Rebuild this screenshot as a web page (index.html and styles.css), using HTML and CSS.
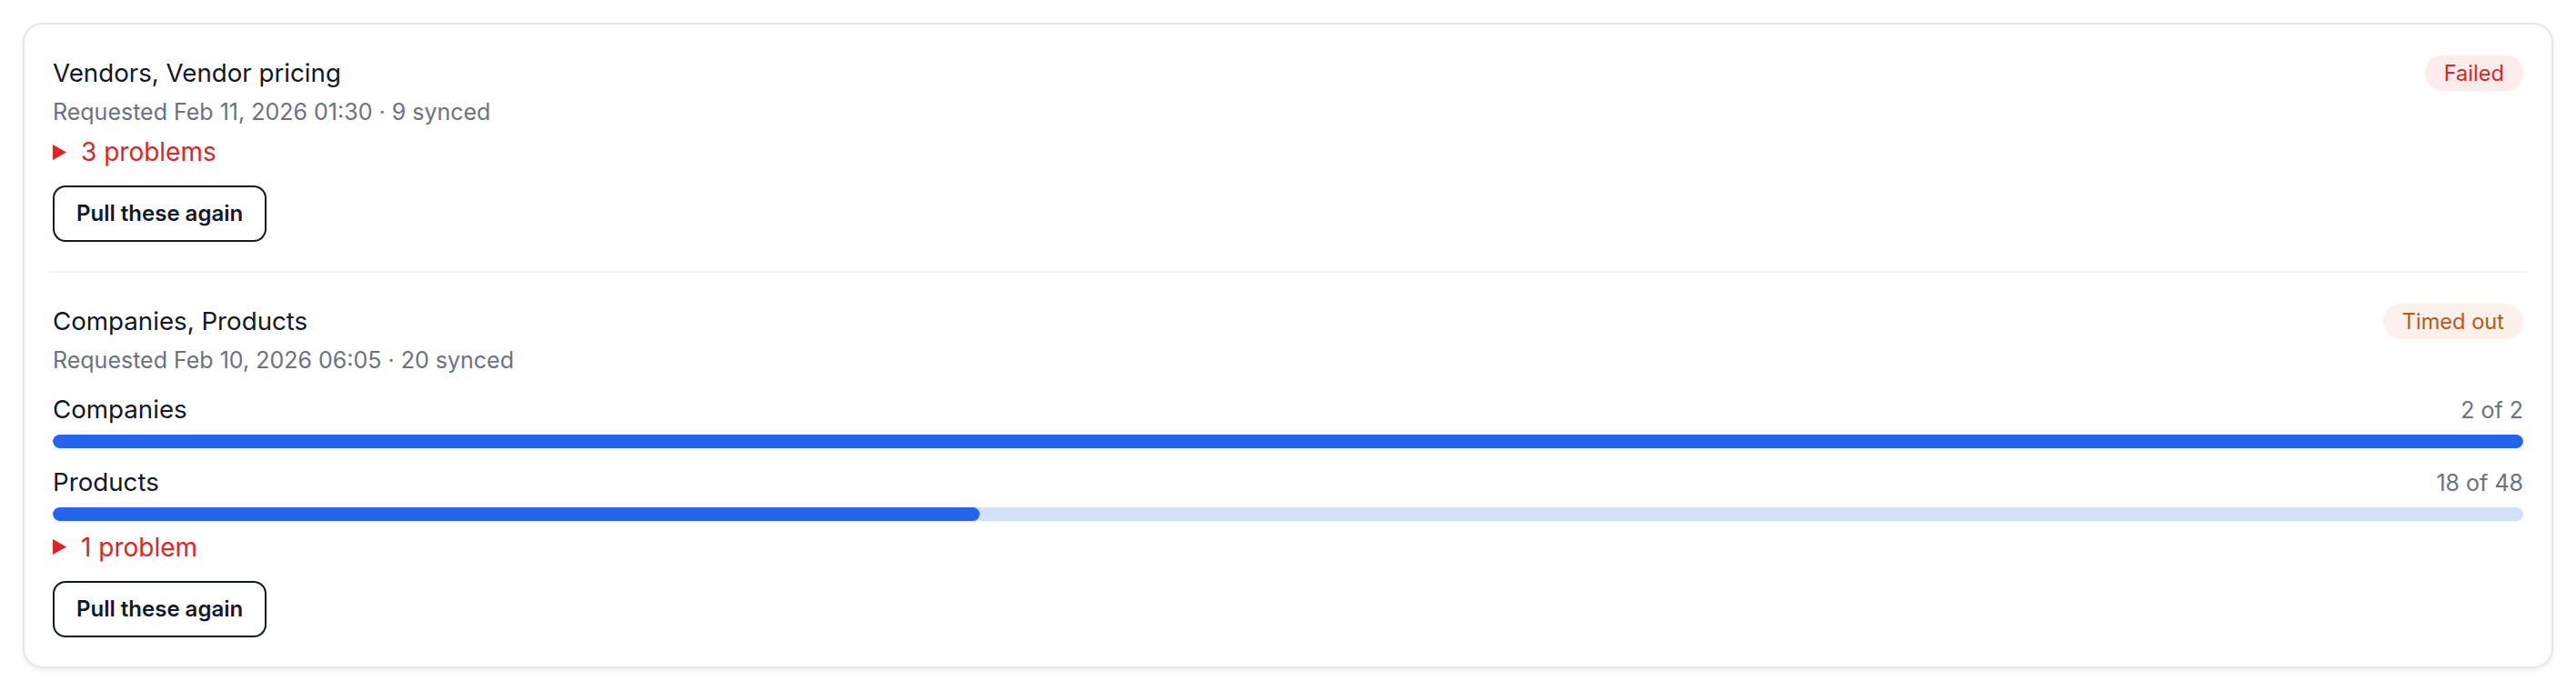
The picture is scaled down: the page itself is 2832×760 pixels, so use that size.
FILE: index.html
```html
<!DOCTYPE html>
<html lang="en">
<head>
<meta charset="utf-8">
<title>Sync requests</title>
<link rel="stylesheet" href="styles.css">
</head>
<body>
<div class="page">
  <section class="card">
    <article class="job">
      <div class="job-head">
        <h2 class="job-title">Vendors, Vendor pricing</h2>
        <span class="badge badge-failed">Failed</span>
      </div>
      <p class="job-meta">Requested Feb 11, 2026 01:30 · 9 synced</p>
      <div class="problems">
        <svg class="caret" width="15" height="17" viewBox="0 0 15 17"><path d="M0 0 L15 8.5 L0 17 Z" fill="#dc2626"/></svg>
        <span>3 problems</span>
      </div>
      <button class="btn" type="button">Pull these again</button>
    </article>
    <article class="job">
      <div class="job-head">
        <h2 class="job-title">Companies, Products</h2>
        <span class="badge badge-timeout">Timed out</span>
      </div>
      <p class="job-meta">Requested Feb 10, 2026 06:05 · 20 synced</p>
      <div class="progress-list">
        <div class="progress">
          <div class="progress-head">
            <span class="progress-name">Companies</span>
            <span class="progress-count">2 of 2</span>
          </div>
          <div class="track"><div class="fill" style="width:100%"></div></div>
        </div>
        <div class="progress">
          <div class="progress-head">
            <span class="progress-name">Products</span>
            <span class="progress-count">18 of 48</span>
          </div>
          <div class="track"><div class="fill" style="width:37.5%"></div></div>
        </div>
      </div>
      <div class="problems problems-after-bars">
        <svg class="caret" width="15" height="17" viewBox="0 0 15 17"><path d="M0 0 L15 8.5 L0 17 Z" fill="#dc2626"/></svg>
        <span>1 problem</span>
      </div>
      <button class="btn" type="button">Pull these again</button>
    </article>
  </section>
</div>
</body>
</html>
```

FILE: styles.css
```css
* { box-sizing: border-box; }

html, body {
  margin: 0;
  padding: 0;
  background: #ffffff;
}

body {
  font-family: Inter, "Noto Sans", "Liberation Sans", sans-serif;
  color: #111827;
}

.page {
  padding: 25px;
}

.card {
  border: 2px solid #e6e7eb;
  border-radius: 22px;
  box-shadow: 0 2px 4px rgba(17, 24, 39, 0.08);
  padding: 0 27px;
  background: #ffffff;
}

.job {
  display: flex;
  flex-direction: column;
  align-items: flex-start;
  padding: 32px 4px 32px;
}

.job + .job {
  border-top: 2px solid #f1f2f4;
}

.job-head {
  align-self: stretch;
  display: flex;
  justify-content: space-between;
  align-items: center;
}

.job-title {
  margin: 0;
  font-size: 27.7px;
  line-height: 42px;
  font-weight: 400;
  color: #111827;
}

.badge {
  display: inline-block;
  height: 39px;
  line-height: 39px;
  padding: 0 21px;
  border-radius: 999px;
  font-size: 23.6px;
  font-weight: 400;
}

.badge-failed {
  background: #feecec;
  color: #d12a2a;
}

.badge-timeout {
  background: #fcf1ea;
  color: #b45a1c;
}

.job-meta {
  margin: 4px 0 0;
  font-size: 25px;
  line-height: 36px;
  color: #6b7280;
}

.problems {
  display: flex;
  align-items: center;
  gap: 16px;
  margin-top: 6px;
  font-size: 28px;
  line-height: 40px;
  color: #dc2626;
}

.problems-after-bars {
  margin-top: 8.5px;
}

.caret {
  display: block;
  flex: none;
}

.btn {
  margin-top: 17px;
  height: 62px;
  padding: 15px 24px;
  border: 2px solid #111827;
  border-radius: 14px;
  background: #ffffff;
  font-family: inherit;
  font-size: 24px;
  line-height: 28px;
  font-weight: 600;
  color: #111827;
}

.progress-list {
  align-self: stretch;
  display: flex;
  flex-direction: column;
  gap: 16px;
  margin-top: 15px;
}

.progress-head {
  display: flex;
  justify-content: space-between;
  align-items: baseline;
}

.progress-name {
  font-size: 27.7px;
  line-height: 42px;
  color: #111827;
}

.progress-count {
  font-size: 25px;
  line-height: 36px;
  color: #6b7280;
}

.track {
  margin-top: 7px;
  height: 15px;
  border-radius: 999px;
  background: #d3e0fb;
  overflow: hidden;
}

.fill {
  height: 100%;
  border-radius: 999px;
  background: #2563eb;
}
```
